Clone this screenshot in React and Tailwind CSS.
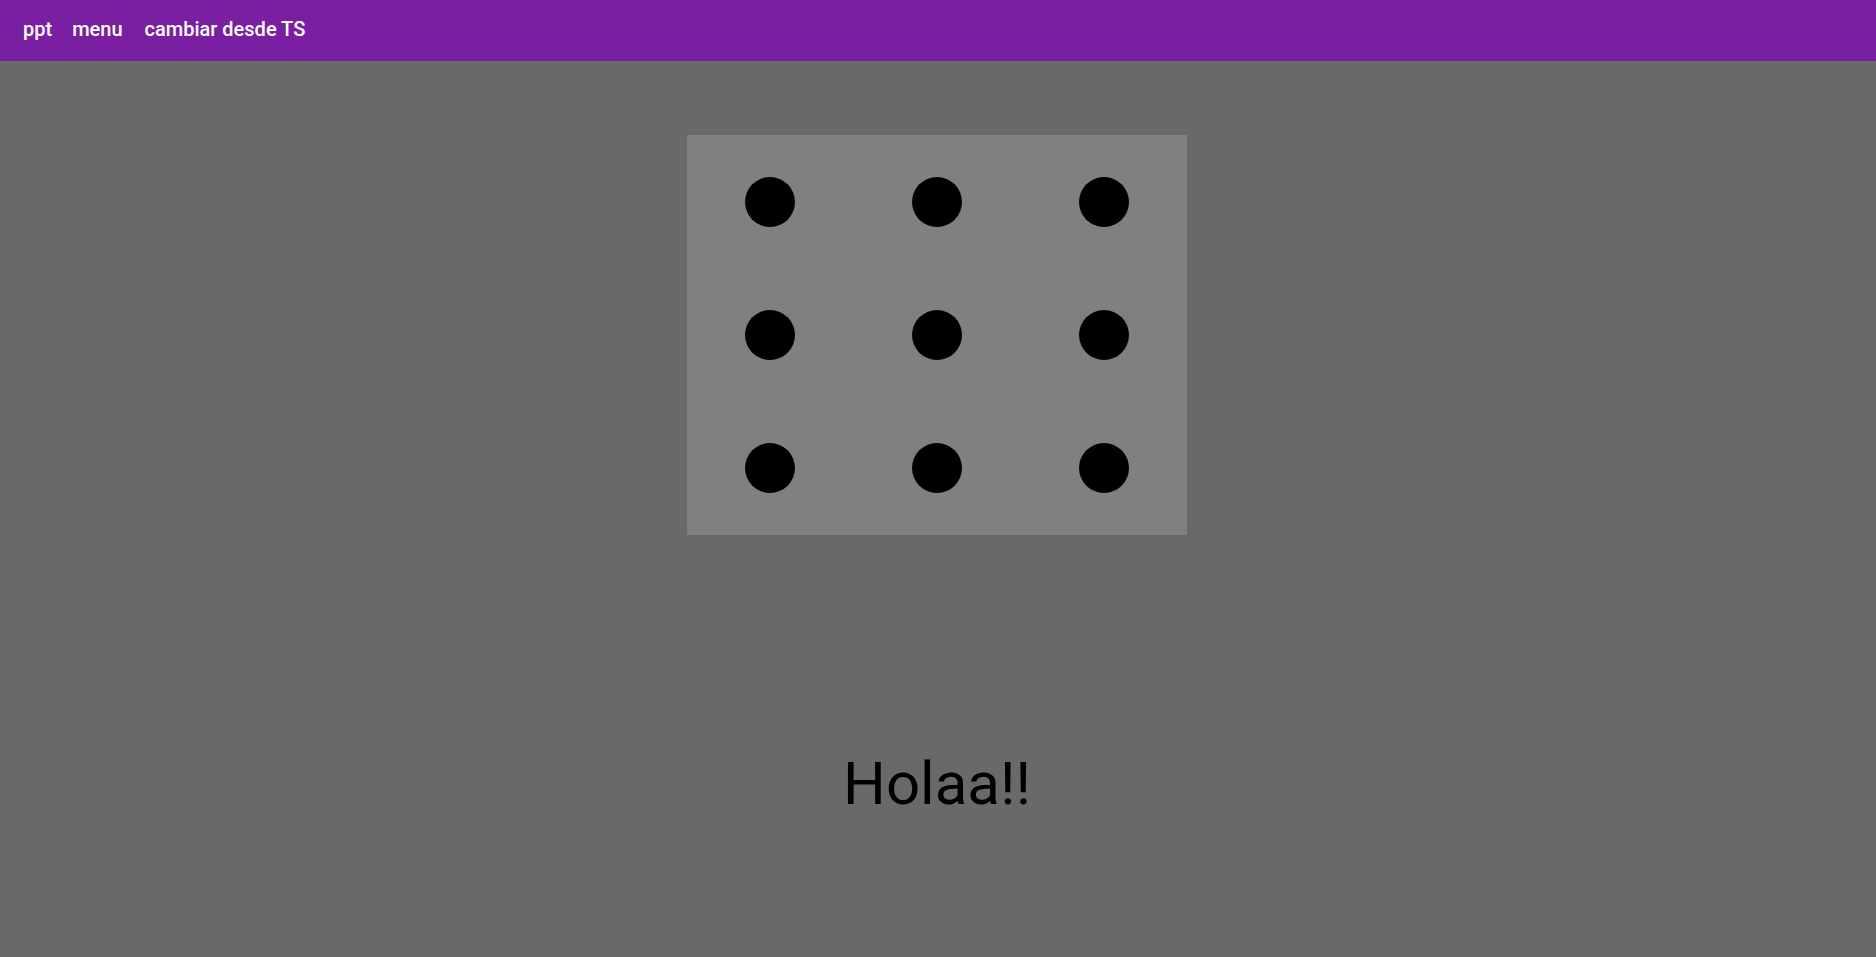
export default function App() {
  const dots = Array.from({ length: 9 });
  return (
    <div className="min-h-[957px] w-full bg-[#696969]" style={{ fontFamily: "Roboto, 'Liberation Sans', sans-serif" }}>
      <header className="flex h-[61px] items-center bg-[#7b1fa2] px-[23px] pb-[4px] text-[20px] font-medium text-white">
        <span>ppt</span>
        <span className="ml-[20px]">menu</span>
        <span className="ml-[22px]">cambiar desde TS</span>
      </header>
      <main className="flex flex-col items-center">
        <div className="mt-[74px] mr-[2px] grid h-[400px] w-[500px] grid-cols-3 grid-rows-3 bg-[#808080]">
          {dots.map((_, i) => (
            <div key={i} className="flex items-center justify-center">
              <div className="h-[50px] w-[50px] rounded-full bg-black" />
            </div>
          ))}
        </div>
        <div className="mt-[213px] mr-[2px] text-[60px] font-normal text-black" style={{ lineHeight: "normal" }}>
          Holaa!!
        </div>
      </main>
    </div>
  );
}
